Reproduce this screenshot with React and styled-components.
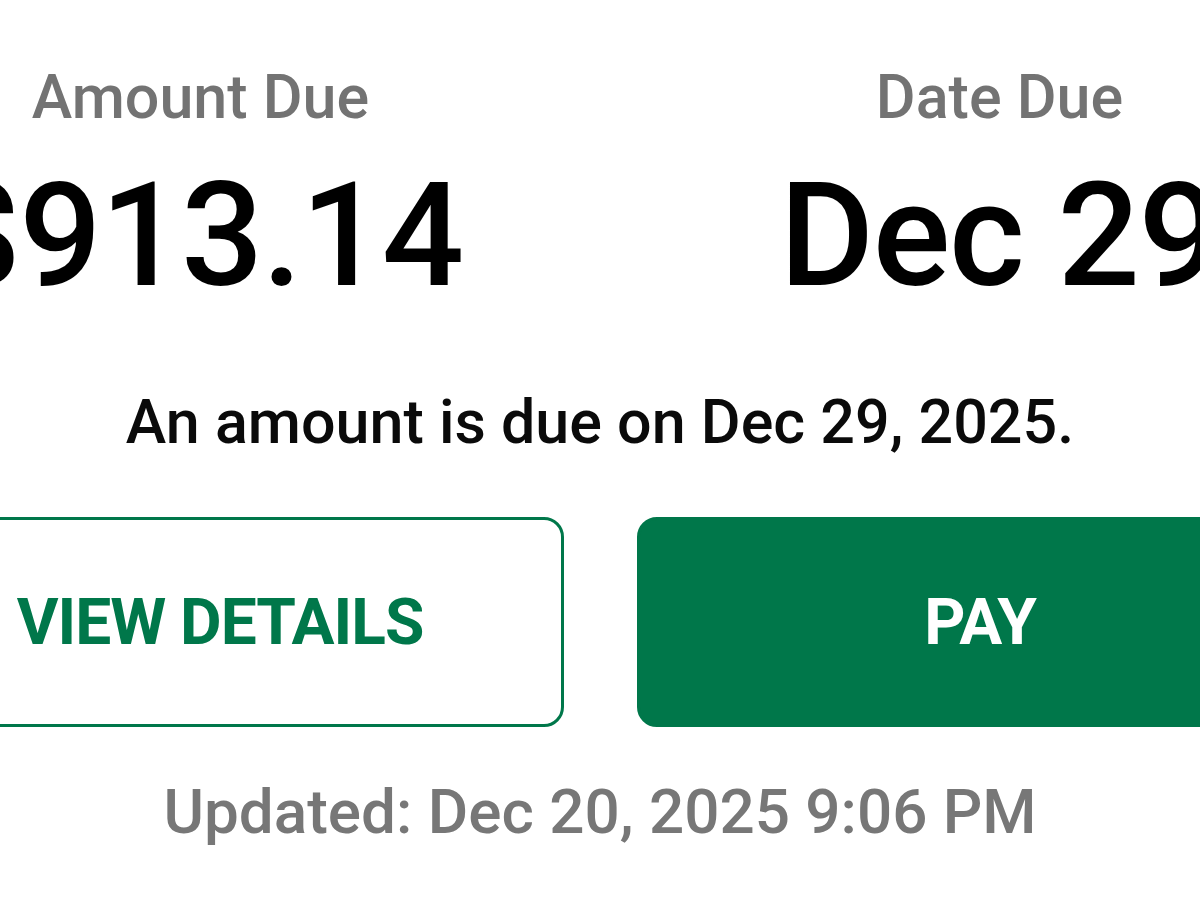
import React from 'react';
import styled, { createGlobalStyle } from 'styled-components';

const GlobalStyle = createGlobalStyle`
  html, body {
    margin: 0;
    padding: 0;
    background: #ffffff;
    overflow: hidden;
  }
  body {
    font-family: Roboto, "Noto Sans", "Liberation Sans", sans-serif;
  }
`;

const Screen = styled.div`
  width: 1200px;
  height: 900px;
  overflow: hidden;
  display: flex;
  flex-direction: column;
  align-items: center;
  background: #fff;
`;

const Summary = styled.div`
  flex: none;
  width: 1598px;
  display: grid;
  grid-template-columns: 1fr 1fr;
  padding-top: 62px;
`;

const Stat = styled.div`
  display: flex;
  flex-direction: column;
  align-items: center;
`;

const Label = styled.div`
  font-size: 61px;
  line-height: 70px;
  color: #737373;
  font-weight: 500;
`;

const Value = styled.div`
  margin-top: 18px;
  font-size: 145px;
  line-height: 170px;
  font-weight: 500;
  letter-spacing: -1.5px;
  color: #000;
  white-space: nowrap;
`;

const Message = styled.p`
  margin: 67px 0 0;
  font-size: 61px;
  line-height: 70px;
  font-weight: 500;
  color: #0a0a0a;
  white-space: nowrap;
`;

const Actions = styled.div`
  flex: none;
  width: 1447px;
  margin-top: 60px;
  display: grid;
  grid-template-columns: 1fr 1fr;
  gap: 73px;
`;

const Button = styled.button`
  height: 210px;
  border-radius: 20px;
  border: 3px solid #00774a;
  background: ${p => (p.$filled ? '#00774a' : '#fff')};
  color: ${p => (p.$filled ? '#fff' : '#00774a')};
  font-family: Roboto, "Noto Sans", "Liberation Sans", sans-serif;
  font-size: 64px;
  font-weight: 700;
  letter-spacing: -1px;
  text-transform: uppercase;
  padding: 0;
`;

const Updated = styled.div`
  margin-top: 50px;
  font-size: 62px;
  line-height: 70px;
  color: #777;
  font-weight: 500;
  white-space: nowrap;
`;

export default function App() {
  return (
    <>
      <GlobalStyle />
      <Screen>
        <Summary>
          <Stat>
            <Label>Amount Due</Label>
            <Value>$913.14</Value>
          </Stat>
          <Stat>
            <Label>Date Due</Label>
            <Value>Dec 29</Value>
          </Stat>
        </Summary>
        <Message>An amount is due on Dec 29, 2025.</Message>
        <Actions>
          <Button>View Details</Button>
          <Button $filled>Pay</Button>
        </Actions>
        <Updated>Updated: Dec 20, 2025 9:06 PM</Updated>
      </Screen>
    </>
  );
}
